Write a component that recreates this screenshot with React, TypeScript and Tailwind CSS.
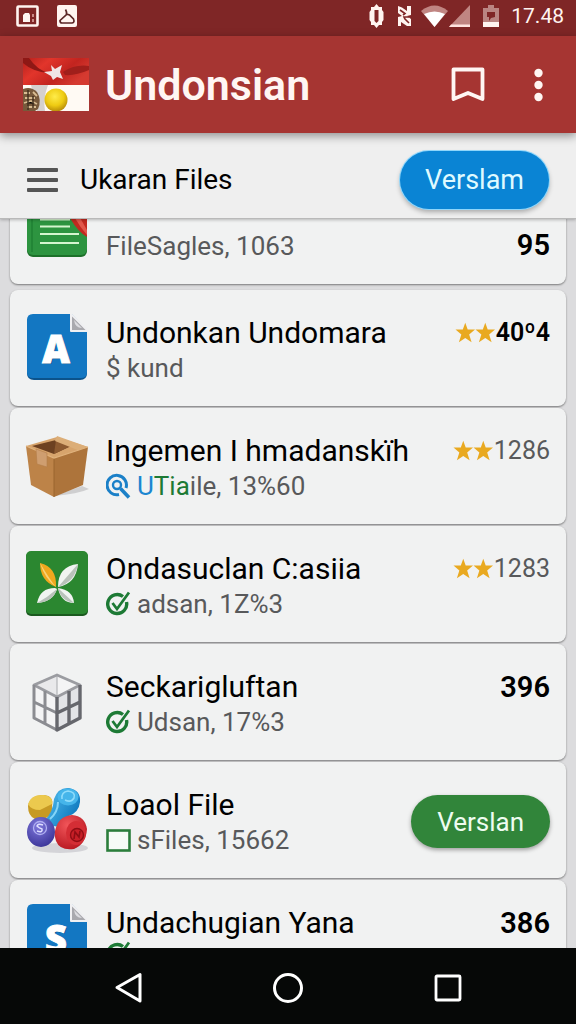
import type { ReactNode } from "react";

function StatusBar() {
  return (
    <div className="flex h-9 shrink-0 items-center justify-between bg-[#7f2626] pl-4 pr-3 pb-1">
      <div className="flex items-center gap-[18px]">
        <svg width="23" height="22" viewBox="0 0 23 22" aria-hidden="true">
          <rect x="1.5" y="1.5" width="20" height="19" rx="1" fill="none" stroke="#fff4f0" strokeWidth="2.6" />
          <path d="M7 17V10l2-2h4l1 2v7z" fill="#fff4f0" />
          <path d="M16 9h2v3h-2zM16 14h2v3h-2z" fill="#c98a85" />
        </svg>
        <svg width="20" height="22" viewBox="0 0 20 22" aria-hidden="true">
          <rect width="20" height="22" rx="2" fill="#fff4f0" />
          <path d="M8.500 4.500Q10 7 9.500 9.500L3 15.500Q3 18 5 18H15Q18 17.500 16.500 14L12.500 10L9.500 9" fill="none" stroke="#5a2525" strokeWidth="1.7" />
        </svg>
      </div>
      <div className="flex items-center">
        <svg width="17" height="24" viewBox="0 0 17 24" aria-hidden="true">
          <path d="M8.500 0L11 3H14V6L15.500 8V16L14 18V21H11L8.500 24L6 21H3V18L1.500 16V8L3 6V3H6z" fill="#fff4f0" />
          <path d="M6.500 6H10.500V17L8.500 19L6.500 17z" fill="#7f2626" />
        </svg>
        <svg className="ml-3" width="15" height="24" viewBox="0 0 15 24" aria-hidden="true">
          <path d="M1 2L5 3.500L10 7V2H14V11L10 12L14 15V22H10L4 18V22H1V13L5 12L1 9z" fill="#fff4f0" />
          <path d="M3 6L8 9.500L6 11M12 13L7 13L8 15L12 19" fill="none" stroke="#7f2626" strokeWidth="1.6" />
        </svg>
        <svg className="ml-2" width="29" height="24" viewBox="0 0 29 24" aria-hidden="true">
          <path d="M1 7Q14.500-4 28 7L14.500 23z" fill="#c08582" />
          <path d="M4 10Q14.500 5 25 10L14.500 23z" fill="#fff" />
        </svg>
        <svg width="22" height="24" viewBox="0 0 22 24" aria-hidden="true">
          <path d="M21 1V23H0z" fill="#c08582" />
          <path d="M2 20.500H21V23H0z" fill="#ffe3df" />
        </svg>
        <svg className="ml-3" width="16" height="24" viewBox="0 0 16 24" aria-hidden="true">
          <path d="M5 1H11V4H16V18H0V4H5z" fill="#ba8582" />
          <path d="M0 18H16V23H0z" fill="#fff4f0" />
          <path d="M4 8H12V13L8 14L6 17V13H4z" fill="#7f2626" />
        </svg>
        <time className="ml-3 text-[21px] leading-6 text-[#fff4f0]">17.48</time>
      </div>
    </div>
  );
}

function FlagLogo() {
  return (
    <svg width="66" height="53" viewBox="0 0 66 53" aria-hidden="true">
      <defs>
        <linearGradient id="flag-red" x1="0" y1="0" x2="1" y2="0.5">
          <stop offset="0" stopColor="#b3201c" />
          <stop offset="0.35" stopColor="#e2352b" />
          <stop offset="0.7" stopColor="#c2241f" />
          <stop offset="1" stopColor="#d53a30" />
        </linearGradient>
        <radialGradient id="flag-gold" cx="0.45" cy="0.35" r="0.65">
          <stop offset="0" stopColor="#ffec4a" />
          <stop offset="0.6" stopColor="#eecb12" />
          <stop offset="1" stopColor="#b98d08" />
        </radialGradient>
      </defs>
      <rect width="66" height="27" fill="url(#flag-red)" />
      <path d="M0 0H6Q14 12 26 15Q10 14 0 5z" fill="#8e1815" />
      <path d="M40 14Q52 6 66 8V12Q52 18 42 17z" fill="#a01f1b" />
      <rect y="27" width="66" height="26" fill="#fffaf4" />
      <path d="M8 27H25Q20 40 22 53H14z" fill="#d5d0cd" />
      <path d="M0 31Q8 28 14 34Q19 42 15 51L12 53H0z" fill="#77593b" />
      <path d="M1 35H7M10 34L14 38M2 40H12M1 45L8 43L14 46M4 49H13" stroke="#d9bd92" strokeWidth="1.800" />
      <path d="M5 32V52M10 38V50" stroke="#3e2c1c" strokeWidth="1.400" />
      <circle cx="33" cy="42" r="11.500" fill="url(#flag-gold)" />
      <path d="M28 7L32 11L39 7L37 14L40 21L34 19L30 22L28 18L21 14L29 13z" fill="#f0e6e6" />
    </svg>
  );
}

function AppBar() {
  return (
    <header className="relative z-20 flex h-[97px] shrink-0 items-center bg-[#a63532] pl-[23px] pr-6 shadow-[0_3px_9px_rgba(0,0,0,0.4)]">
      <FlagLogo />
      <h1 className="ml-4 flex-1 text-[43px] font-semibold leading-[48px] text-[#fff6f3]">Undonsian</h1>
      <button type="button" aria-label="Bookmark" className="flex h-12 w-12 items-center justify-center">
        <svg width="34" height="35" viewBox="0 0 34 35" fill="none" stroke="#fff6f3" strokeWidth="3.800" strokeLinejoin="round" aria-hidden="true">
          <path d="M2.500 2.500H31.500V32L17 26L2.500 32z" />
        </svg>
      </button>
      <button type="button" aria-label="More options" className="ml-8 flex h-12 w-7 items-center justify-center">
        <svg width="9" height="34" viewBox="0 0 9 34" fill="#fff6f3" aria-hidden="true">
          <circle cx="4.500" cy="5" r="4.200" />
          <circle cx="4.500" cy="17" r="4.200" />
          <circle cx="4.500" cy="29" r="4.200" />
        </svg>
      </button>
    </header>
  );
}

function Toolbar() {
  return (
    <div className="relative z-10 flex h-[86px] shrink-0 items-center border-b border-[#b9b9b9] bg-[#efefef] pl-[26px] pr-[27px] pt-2 shadow-[0_1px_3px_rgba(0,0,0,0.25)]">
      <button type="button" aria-label="Menu" className="flex h-10 items-center">
        <svg width="32" height="24" viewBox="0 0 32 24" fill="#555" aria-hidden="true">
          <rect x="1" y="0" width="31" height="4" rx="1" />
          <rect x="1" y="10" width="31" height="4" rx="1" />
          <rect x="1" y="20" width="31" height="4" rx="1" />
        </svg>
      </button>
      <h2 className="ml-[22px] flex-1 text-[28px] leading-9 text-black">Ukaran Files</h2>
      <button type="button" className="h-[58px] rounded-full bg-[#0a84d4] px-[25px] text-[27px] leading-9 text-[#dffaff] shadow-[0_0_0_1px_#8fd6fb,0_3px_5px_rgba(0,0,0,0.3)]">
        Verslam
      </button>
    </div>
  );
}

function SheetIcon() {
  return (
    <svg width="62" height="65" viewBox="0 0 62 65" aria-hidden="true">
      <rect x="1" y="1" width="60" height="64" rx="6" fill="#1c7029" />
      <rect x="1" y="0" width="60" height="63" rx="6" fill="#2d9440" />
      <path d="M6 0V60" stroke="#1f8033" strokeWidth="1.500" />
      <path d="M14 20H44M14 27.500H44M14 34.500H44M14 42H53M14 51H53" stroke="#d6f5cf" strokeWidth="2.200" />
      <path d="M44 24H61V45Q52 40 44 26z" fill="#c22a20" />
      <path d="M48 24H53L61 38V43Q53 34 48 24z" fill="#e2574a" />
    </svg>
  );
}

function DocIcon({ letter }: { letter: string }) {
  return (
    <svg width="62" height="66" viewBox="0 0 62 66" aria-hidden="true">
      <path d="M7 2H46L61 18V59Q61 66 54 66H8Q1 66 1 59V8Q1 2 7 2z" fill="#0b538c" />
      <path d="M7 0H46L61 16V58Q61 64 55 64H7Q1 64 1 58V6Q1 0 7 0z" fill="#1377c2" />
      <path d="M45 0L62 17H45z" fill="#a9a9ae" stroke="#f0f0f2" strokeWidth="2" strokeLinejoin="round" />
      <path d="M48 6L56 14Q49 14 48 6z" fill="#dcdce0" />
      <text x="31" y="50" textAnchor="middle" fontFamily="Open Sans, sans-serif" fontWeight="800" fontSize="38" fill="#07467c">
        {letter}
      </text>
      <text x="30" y="49" textAnchor="middle" fontFamily="Open Sans, sans-serif" fontWeight="800" fontSize="38" fill="#fff" stroke="#fff" strokeWidth="1">
        {letter}
      </text>
    </svg>
  );
}

function BoxIcon() {
  return (
    <svg width="62" height="66" viewBox="0 0 62 66" className="overflow-visible" aria-hidden="true">
      <path d="M28 64L56 54L63 57Q52 62 28 64z" fill="#cfcfd0" />
      <path d="M0 14L31 5L62 15L28 27z" fill="#d7a46c" />
      <path d="M6 14L30 8L45 14L28 22z" fill="#6d4121" />
      <path d="M30 8L45 14L28 22z" fill="#8d5a30" />
      <path d="M31 4L62 15L54 19L29 9z" fill="#dcae78" />
      <path d="M0 14L28 26V65L5 53z" fill="#bd8348" />
      <path d="M28 26L62 15L57 53L28 65z" fill="#ad743b" />
      <path d="M28 26V65" stroke="#9a642f" strokeWidth="1" />
      <path d="M0 14L28 26L62 15" fill="none" stroke="#e0b27c" strokeWidth="1.200" />
      <path d="M10 17L21 21V35L11 32z" fill="#cf9e70" stroke="#b37d4a" strokeWidth="0.600" />
    </svg>
  );
}

function PetalIcon() {
  return (
    <svg width="62" height="66" viewBox="0 0 62 66" aria-hidden="true">
      <rect x="0" y="2" width="62" height="64" rx="5" fill="#1b5a1f" />
      <rect x="0" y="1" width="62" height="63" rx="5" fill="#2b8730" />
      <path d="M30 37Q14 31 14 13Q31 17 30 37z" fill="#f0a81e" />
      <path d="M30 37Q24 30 14 13Q19 29 30 37z" fill="#f9d377" />
      <path d="M32 37Q32 16 52 14Q50 34 32 37z" fill="#f1f4f1" />
      <path d="M32 37L52 14Q49 32 32 37z" fill="#b9c2ba" />
      <path d="M29 38Q14 38 11 53Q27 52 31 39z" fill="#f1f4f1" />
      <path d="M31 39Q27 52 11 53Q22 47 31 39z" fill="#b9c2ba" />
      <path d="M32 38Q47 40 48 53Q35 53 32 38z" fill="#f1f4f1" />
      <path d="M32 38L48 53Q35 51 32 38z" fill="#b9c2ba" />
    </svg>
  );
}

function CubeIcon() {
  return (
    <svg width="62" height="66" viewBox="0 0 62 66" strokeLinejoin="round" aria-hidden="true">
      <path d="M31 6L54 17V50L31 62L8 50V17z" fill="#f4f4f5" />
      <path d="M31 29L54 18V50L31 62z" fill="#e3e4e7" />
      <path d="M31 7V29L9 18z" fill="#e9e9eb" />
      <path d="M31 7V28" stroke="#b3b4b8" strokeWidth="1.200" />
      <path d="M31 7L54 17L31 29L8 17z" fill="none" stroke="#9b9ca1" strokeWidth="2.800" />
      <path d="M8 17V50L31 62M19 23V55M8 34L31 45" fill="none" stroke="#8b8c91" strokeWidth="3" />
      <path d="M31 29V62L54 50V17M43 23V55M31 45L54 34" fill="none" stroke="#66676d" strokeWidth="3.400" />
    </svg>
  );
}

function StampsIcon() {
  return (
    <svg width="62" height="70" viewBox="0 0 62 70" className="overflow-visible" aria-hidden="true">
      <defs>
        <linearGradient id="stamp-blue" x1="0" y1="0" x2="1" y2="0.6">
          <stop offset="0" stopColor="#56c1f2" />
          <stop offset="1" stopColor="#0d78bd" />
        </linearGradient>
        <radialGradient id="stamp-red" cx="0.4" cy="0.3" r="0.8">
          <stop offset="0" stopColor="#f2565a" />
          <stop offset="1" stopColor="#b3131c" />
        </radialGradient>
        <radialGradient id="stamp-violet" cx="0.4" cy="0.3" r="0.8">
          <stop offset="0" stopColor="#7f78dc" />
          <stop offset="1" stopColor="#352f92" />
        </radialGradient>
      </defs>
      <ellipse cx="34" cy="62" rx="28" ry="5" fill="#d4d4d8" />
      <path d="M2 20Q4 9 18 9Q28 10 26 20V27Q20 35 9 33Q2 30 2 20z" fill="#c79a24" />
      <path d="M2 18Q5 8 18 9Q28 11 26 18L14 24Q5 24 2 18z" fill="#ecc94e" />
      <path d="M28 13Q32 1 43 2Q55 4 54 16Q53 26 43 30Q38 34 34 40Q25 42 19 34Q27 26 28 13z" fill="url(#stamp-blue)" />
      <ellipse cx="42" cy="11" rx="10.500" ry="8.500" fill="#45b5ea" />
      <path d="M36 13Q35 6 42 5Q50 6 48 12Q45 17 39 14" fill="none" stroke="#8fdcfb" strokeWidth="1.500" />
      <path d="M24 33Q32 26 32 16" fill="none" stroke="#84d5f8" strokeWidth="2" />
      <ellipse cx="15" cy="46" rx="14" ry="15" fill="url(#stamp-violet)" />
      <circle cx="14" cy="42" r="6.500" fill="none" stroke="#b1b0f2" strokeWidth="1.300" />
      <path d="M17 39Q12 37 11 40Q13 42 16 43Q17 47 11 45" fill="none" stroke="#e0e0ff" strokeWidth="1.500" />
      <path d="M29 45Q32 30 46 29Q59 30 61 43Q60 58 48 63Q34 65 30 55Q28 50 29 45z" fill="url(#stamp-red)" />
      <ellipse cx="50" cy="47" rx="10" ry="12" fill="#d42e35" />
      <circle cx="51" cy="49" r="6.500" fill="#c71f27" stroke="#8f0d14" strokeWidth="1.400" />
      <path d="M48 53L49 46L53 51L54 45" fill="none" stroke="#8f0d14" strokeWidth="1.600" />
    </svg>
  );
}

function CheckCircle() {
  return (
    <svg width="25" height="27" viewBox="0 0 25 27" fill="none" stroke="#1d7a35" aria-hidden="true">
      <path d="M17 5.500A9.500 9.500 0 1 0 20.500 11" strokeWidth="3.400" />
      <path d="M6.500 12L11 18L23 1.500" strokeWidth="2.800" />
    </svg>
  );
}

function SearchMark() {
  return (
    <svg width="25" height="26" viewBox="0 0 25 26" fill="none" stroke="#1b80c8" aria-hidden="true">
      <path d="M13 21.500A9.700 9.700 0 1 1 20 15" strokeWidth="3" />
      <circle cx="11" cy="12" r="4" strokeWidth="2.400" />
      <path d="M14.500 15.500L23 24.500" strokeWidth="3.600" />
    </svg>
  );
}

function SquareMark() {
  return (
    <svg width="25" height="23" viewBox="0 0 25 23" aria-hidden="true">
      <rect x="1.500" y="1.500" width="22" height="20" fill="#f6fbf6" stroke="#2b7d3b" strokeWidth="2.600" />
    </svg>
  );
}

function Stars() {
  return (
    <svg width="41" height="22" viewBox="0 0 42 22" fill="#e9a920" role="img" aria-label="2 stars">
      <path d="M10.500 0.500L13 7.500H20.500L14.500 12.500L17 20.500L10.500 16L4 20.500L6.500 12.500L0.500 7.500H8z" />
      <path d="M31 0.500L33.500 7.500H41L35 12.500L37.500 20.500L31 16L24.500 20.500L27 12.500L21 7.500H28.500z" />
    </svg>
  );
}

type RowProps = {
  icon: ReactNode;
  title?: string;
  mark?: ReactNode;
  detail: ReactNode;
  trailing: ReactNode;
};

function Row({ icon, title, mark, detail, trailing }: RowProps) {
  return (
    <li className="flex h-[116px] shrink-0 items-start gap-[18px] rounded-lg bg-[#f1f2f2] px-4 shadow-[0_1px_2px_rgba(0,0,0,0.45)]">
      <div className="w-[62px] shrink-0 pt-6">{icon}</div>
      <div className="min-w-0 flex-1 whitespace-nowrap pt-[25px]">
        <h3 className="min-h-9 text-[30px] leading-9 text-black">{title}</h3>
        <p className="flex items-center gap-1.5 text-[26px] leading-[34px] text-[#58595b]">
          {mark}
          <span>{detail}</span>
        </p>
      </div>
      {trailing}
    </li>
  );
}

function Count({ children }: { children: ReactNode }) {
  return <strong className="pt-[25px] text-[29px] font-semibold leading-9 text-black">{children}</strong>;
}

function Rating({ value, bold = false }: { value: string; bold?: boolean }) {
  return (
    <div className="flex items-center pt-[25px] leading-9">
      <Stars />
      {bold ? (
        <strong className="text-[25px] font-semibold text-black">{value}</strong>
      ) : (
        <span className="text-[25px] text-[#58595b]">{value}</span>
      )}
    </div>
  );
}

function NavBar() {
  return (
    <nav className="relative z-10 flex h-[76px] shrink-0 items-center justify-center gap-[112px] bg-[#060807] pt-1">
      <button type="button" aria-label="Back" className="flex h-12 w-12 items-center justify-center">
        <svg width="28" height="32" viewBox="0 0 28 32" fill="none" stroke="#fff" strokeWidth="3" strokeLinejoin="round" aria-hidden="true">
          <path d="M26 2.500V29L3 15.500z" />
        </svg>
      </button>
      <button type="button" aria-label="Home" className="flex h-12 w-12 items-center justify-center">
        <svg width="32" height="32" viewBox="0 0 32 32" fill="none" stroke="#fff" strokeWidth="3" aria-hidden="true">
          <circle cx="16" cy="16" r="13.500" />
        </svg>
      </button>
      <button type="button" aria-label="Recent apps" className="flex h-12 w-12 items-center justify-center">
        <svg width="28" height="28" viewBox="0 0 28 28" fill="none" stroke="#fff" strokeWidth="2.800" strokeLinejoin="round" aria-hidden="true">
          <rect x="2" y="2" width="24" height="24" rx="1" />
        </svg>
      </button>
    </nav>
  );
}

export default function App() {
  return (
    <div className="flex h-screen flex-col overflow-hidden bg-[#dcdcde] font-['Roboto',sans-serif]">
      <StatusBar />
      <AppBar />
      <Toolbar />
      <main className="min-h-0 flex-1 overflow-hidden px-2.5">
        <ul className="-mt-[51px] mb-1.5">
          <Row
            icon={<SheetIcon />}
            detail="FileSagles, 1063"
            trailing={
              <div className="pt-[34px]">
                <div className="flex"><Count>95</Count></div>
              </div>
            }
          />
        </ul>
        <ul className="flex flex-col gap-0.5">
          <Row icon={<DocIcon letter="A" />} title="Undonkan Undomara" detail="$ kund" trailing={<Rating value="40º4" bold />} />
          <Row
            icon={<BoxIcon />}
            title="Ingemen I hmadanskïh"
            mark={<SearchMark />}
            detail={
              <>
                <span className="text-[#1b86d0]">U</span>
                <span className="text-[#1d7a35]">Tia</span>ile, 13%60
              </>
            }
            trailing={<Rating value="1286" />}
          />
          <Row icon={<PetalIcon />} title="Ondasuclan C:asiia" mark={<CheckCircle />} detail="adsan, 1Z%3" trailing={<Rating value="1283" />} />
          <Row icon={<CubeIcon />} title="Seckarigluftan" mark={<CheckCircle />} detail="Udsan, 17%3" trailing={<Count>396</Count>} />
          <Row
            icon={<StampsIcon />}
            title="Loaol File"
            mark={<SquareMark />}
            detail="sFiles, 15662"
            trailing={
              <button type="button" className="mt-[33px] h-[53px] rounded-full bg-[#31853a] px-[26px] text-[26px] leading-9 text-[#eefcf0] shadow-[0_2px_4px_rgba(0,0,0,0.35)]">
                Verslan
              </button>
            }
          />
          <Row icon={<DocIcon letter="S" />} title="Undachugian Yana" mark={<CheckCircle />} detail="" trailing={<Count>386</Count>} />
        </ul>
      </main>
      <NavBar />
    </div>
  );
}
